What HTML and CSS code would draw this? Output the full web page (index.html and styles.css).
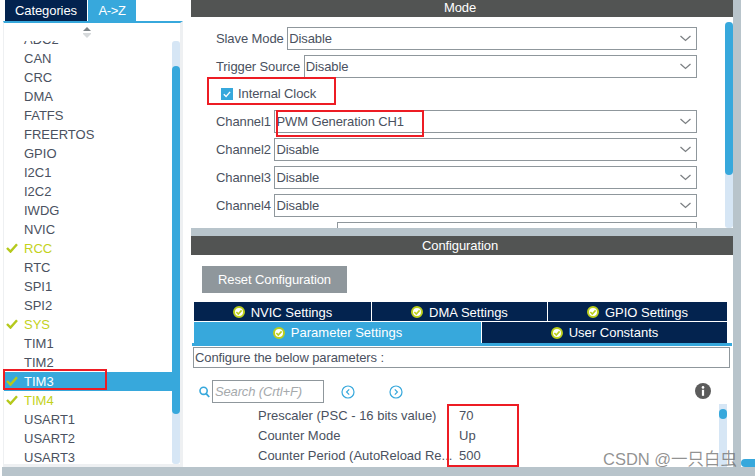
FILE: index.html
```html
<!DOCTYPE html>
<html lang="en">
<head>
<meta charset="utf-8">
<title>Timer configuration</title>
<link rel="stylesheet" href="styles.css">
</head>
<body>
<svg class="defs" width="0" height="0">
  <symbol id="ok" viewBox="0 0 12 12">
    <circle cx="6" cy="6" r="5" fill="#fff" stroke="#bccf1c" stroke-width="2"/>
    <path d="M3.4 6l1.9 2 3.3-3.6" fill="none" stroke="#bccf1c" stroke-width="1.6"/>
  </symbol>
  <symbol id="tick" viewBox="0 0 12 10">
    <path d="M1 5l3.5 3.6L11 1.2" fill="none" stroke="#b5c91c" stroke-width="2.4"/>
  </symbol>
  <symbol id="chev" viewBox="0 0 11 7">
    <path d="M.5 1l5 4.5 5-4.5" fill="none" stroke="#7d8184" stroke-width="1.3"/>
  </symbol>
</svg>
<div class="app">
  <aside class="side">
    <div class="side-tabs">
      <div class="side-tab dark">Categories</div>
      <div class="side-tab light">A-&gt;Z</div>
    </div>
    <div class="side-body">
      <div class="side-up">
        <svg width="10" height="11" viewBox="0 0 10 11"><path d="M5 0l4 4H1z" fill="#7e8589"/><path d="M1 6h8v1l-4 4-4-4z" fill="#d6d9db"/></svg>
      </div>
      <div class="side-main">
        <ul class="list">
          <li class="item">ADC2</li>
          <li class="item">CAN</li>
          <li class="item">CRC</li>
          <li class="item">DMA</li>
          <li class="item">FATFS</li>
          <li class="item">FREERTOS</li>
          <li class="item">GPIO</li>
          <li class="item">I2C1</li>
          <li class="item">I2C2</li>
          <li class="item">IWDG</li>
          <li class="item">NVIC</li>
          <li class="item on"><svg class="tick"><use href="#tick"/></svg>RCC</li>
          <li class="item">RTC</li>
          <li class="item">SPI1</li>
          <li class="item">SPI2</li>
          <li class="item on"><svg class="tick"><use href="#tick"/></svg>SYS</li>
          <li class="item">TIM1</li>
          <li class="item">TIM2</li>
          <li class="item sel"><svg class="tick"><use href="#tick"/></svg>TIM3</li>
          <li class="item on"><svg class="tick"><use href="#tick"/></svg>TIM4</li>
          <li class="item">USART1</li>
          <li class="item">USART2</li>
          <li class="item">USART3</li>
        </ul>
        <div class="vbar side-bar"><div class="thumb"></div></div>
      </div>
    </div>
  </aside>
  <main class="main">
    <section class="mode">
      <h2 class="head head-mode">Mode</h2>
      <div class="mode-body">
        <div class="form">
          <div class="row"><span class="lab">Slave Mode</span><div class="select">Disable<svg class="chev"><use href="#chev"/></svg></div></div>
          <div class="row"><span class="lab">Trigger Source</span><div class="select">Disable<svg class="chev"><use href="#chev"/></svg></div></div>
          <div class="check-row">
            <svg class="box" width="12" height="12" viewBox="0 0 12 12"><rect width="12" height="12" fill="#37a8dc"/><path d="M2.8 6.2l2.3 2.3 4-4.6" fill="none" stroke="#fff" stroke-width="1.4"/></svg>
            <span class="lab lab-check">Internal Clock</span>
          </div>
          <div class="row"><span class="lab">Channel1</span><div class="select">PWM Generation CH1<svg class="chev"><use href="#chev"/></svg></div></div>
          <div class="row"><span class="lab">Channel2</span><div class="select">Disable<svg class="chev"><use href="#chev"/></svg></div></div>
          <div class="row"><span class="lab">Channel3</span><div class="select">Disable<svg class="chev"><use href="#chev"/></svg></div></div>
          <div class="row"><span class="lab">Channel4</span><div class="select">Disable<svg class="chev"><use href="#chev"/></svg></div></div>
          <div class="row row-cut"><div class="select"></div></div>
        </div>
        <div class="vbar mode-bar"><div class="thumb"></div></div>
      </div>
    </section>
    <section class="config">
      <h2 class="head">Configuration</h2>
      <div class="config-body">
        <button class="reset" type="button">Reset Configuration</button>
        <div class="tabs">
          <div class="tab t1"><svg class="ok"><use href="#ok"/></svg>NVIC Settings</div>
          <div class="tab t2"><svg class="ok"><use href="#ok"/></svg>DMA Settings</div>
          <div class="tab t3"><svg class="ok"><use href="#ok"/></svg>GPIO Settings</div>
          <div class="tab t4 active"><svg class="ok"><use href="#ok"/></svg>Parameter Settings</div>
          <div class="tab t5"><svg class="ok"><use href="#ok"/></svg>User Constants</div>
        </div>
        <div class="tab-line"></div>
        <div class="hint">Configure the below parameters :</div>
        <div class="tools">
          <svg class="mag" width="11" height="12" viewBox="0 0 11 12"><circle cx="4.6" cy="4.8" r="3.6" fill="none" stroke="#37a8dc" stroke-width="1.6"/><path d="M7.2 7.6l3 3.4" stroke="#37a8dc" stroke-width="1.8"/></svg>
          <div class="search">Search (Crtl+F)</div>
          <svg class="nav nav-prev" width="14" height="14" viewBox="0 0 14 14"><circle cx="7" cy="7" r="6" fill="none" stroke="#37a8dc" stroke-width="1.2"/><path d="M8.2 4.4L5.6 7l2.6 2.6" fill="none" stroke="#37a8dc" stroke-width="1.2"/></svg>
          <svg class="nav nav-next" width="14" height="14" viewBox="0 0 14 14"><circle cx="7" cy="7" r="6" fill="none" stroke="#37a8dc" stroke-width="1.2"/><path d="M5.8 4.4L8.4 7 5.8 9.6" fill="none" stroke="#37a8dc" stroke-width="1.2"/></svg>
          <svg class="info" width="16" height="16" viewBox="0 0 16 16"><circle cx="8" cy="8" r="8" fill="#5c5c5c"/><rect x="6.9" y="6.8" width="2.2" height="6" fill="#fff"/><circle cx="8" cy="4.4" r="1.3" fill="#fff"/></svg>
        </div>
        <div class="params">
          <dl class="plist">
            <div class="prow"><dt>Prescaler (PSC - 16 bits value)</dt><dd>70</dd></div>
            <div class="prow"><dt>Counter Mode</dt><dd>Up</dd></div>
            <div class="prow"><dt>Counter Period (AutoReload Re...</dt><dd>500</dd></div>
          </dl>
          <div class="vbar param-bar"><div class="dot"></div></div>
        </div>
      </div>
    </section>
  </main>
  <div class="gutter"></div>
  <div class="blob"></div>
</div>
<div class="foot"></div>
<div class="mark m-clock"></div>
<div class="mark m-pwm"></div>
<div class="mark m-tim"></div>
<div class="mark m-vals"></div>
<div class="wm">CSDN @一只白虫</div>
</body>
</html>
```
FILE: styles.css
```css
* { box-sizing: border-box; }
html, body { margin: 0; padding: 0; }
body {
  position: relative;
  width: 755px;
  height: 476px;
  overflow: hidden;
  background: #fff;
  color: #4a5160;
  font: 13px/19px "Liberation Sans", Arial, sans-serif;
}
.defs { position: absolute; }
.app { display: flex; height: 467px; padding-left: 3px; position: relative; }
.foot { height: 9px; margin-left: 2px; background: #b8c4cb; }

/* sidebar */
.side { width: 180px; display: flex; flex-direction: column; }
.side-tabs { display: flex; height: 21px; padding-left: 2px; gap: 1px; }
.side-tab { color: #fff; text-align: center; line-height: 21px; font-size: 13px; }
.side-tab.dark { width: 82px; background: #03234f; letter-spacing: -.1px; }
.side-tab.light { width: 48px; background: #37a8dc; letter-spacing: -.4px; }
.side-body {
  flex: 1; display: flex; flex-direction: column; min-height: 0;
  border-top: 2px solid #37a8dc;
  border-left: 1px solid #eef0f2;
  border-right: 3px solid #eef0f2;
  border-bottom: 3px solid #eef0f2;
}
.side-up { height: 18px; padding: 4px 0 0 78px; line-height: 0; }
.side-main { flex: 1; display: flex; min-height: 0; }
.list { flex: 1; margin: 0; padding: 0; list-style: none; overflow: hidden; }
.item { position: relative; height: 19px; padding-left: 20px; }
.item:first-child { margin-top: -11px; }
.item.on { color: #c3d21c; }
.item.sel { background: #37a8dc; color: #fff; }
.tick { position: absolute; left: 2px; top: 4px; width: 12px; height: 10px; }
.vbar { position: relative; width: 8px; background: #d6e6f5; border-radius: 3px; }
.thumb { background: #37a8dc; border-radius: 4px; }
.side-bar .thumb { position: relative; top: 25px; height: 348px; }

/* main */
.main { width: 542px; margin-left: 8px; display: flex; flex-direction: column; background: #b8c4cb; }
.gutter { width: 8px; background: #b8c4cb; }
.blob { position: absolute; left: 741px; top: 459px; width: 14px; height: 8px; border-radius: 4px 0 0 4px; background: #37a8dc; }
.head { margin: 0; height: 19px; padding-right: 4px; background: #525453; color: #fff; font-size: 13px; font-weight: 400; line-height: 19px; text-align: center; letter-spacing: -.1px; }
.head-mode { height: 17px; line-height: 15px; }
.mode { height: 228px; background: #fff; display: flex; flex-direction: column; }
.mode-body { flex: 1; display: flex; min-height: 0; }
.form { flex: 1; min-width: 0; overflow: hidden; padding: 10px 28px 0 25px; }
.row { display: flex; height: 23px; align-items: center; gap: 3.6px; margin-bottom: 5px; }
.row-cut { padding-left: 121px; }
.lab { letter-spacing: -.1px; white-space: nowrap; }
.lab-check { padding-bottom: 2px; }
.select { position: relative; flex: 1; height: 23px; border: 1px solid #8f979c; padding-left: 1px; line-height: 21px; letter-spacing: -.1px; }
.chev { position: absolute; right: 5px; top: 7px; width: 11px; height: 7px; }
.check-row { display: flex; align-items: center; height: 22px; gap: 5px; margin-bottom: 5px; padding-left: 5px; }
.mode-bar { margin-top: 5px; }
.mode-bar .thumb { height: 153px; }

.config { flex: 1; margin-top: 8px; background: #fff; display: flex; flex-direction: column; min-height: 0; }
.config-body { flex: 1; position: relative; min-height: 0; display: flex; flex-direction: column; padding: 11px 2px 0 2px; }
.reset { align-self: flex-start; margin-left: 9px; width: 145px; height: 27px; border: 0; padding: 0; background: #8f979c; color: #fff; font: 13px "Liberation Sans", Arial, sans-serif; letter-spacing: -.1px; }
.tabs { display: grid; grid-template-columns: 177px 1px 109px 1px 65px 1px 179px; grid-template-rows: 19px 21px; row-gap: 1px; margin: 9px 0 0 1px; width: 533px; }
.tab { display: flex; align-items: center; justify-content: center; gap: 6px; background: #03234f; color: #fff; }
.t1 { grid-column: 1; grid-row: 1; padding-top: 1px; }
.t2 { grid-column: 3 / 6; grid-row: 1; padding-top: 1px; }
.t3 { grid-column: 7; grid-row: 1; padding-top: 1px; }
.t4 { grid-column: 1 / 4; grid-row: 2; }
.t5 { grid-column: 5 / 8; grid-row: 2; }
.tab.active { background: #37a8dc; }
.ok { width: 12px; height: 12px; flex: none; }
.tab-line { height: 3px; background: #37a8dc; margin-right: -1px; margin-left: -1px; }
.hint { height: 21px; margin: 1px 1px 0 0; border: 1px solid #8f979c; padding-left: 1px; line-height: 19px; letter-spacing: -.1px; }
.tools { position: relative; height: 36px; }
.mag { position: absolute; left: 6px; top: 18px; }
.search { position: absolute; left: 19px; top: 12px; width: 112px; height: 23px; border: 1px solid #8f979c; padding-left: 2px; line-height: 21px; color: #a5a9ac; font-style: italic; letter-spacing: -.15px; }
.nav { position: absolute; top: 17px; }
.nav-prev { left: 148px; }
.nav-next { left: 196px; }
.info { position: absolute; left: 502px; top: 15px; }
.params { flex: 1; display: flex; min-height: 0; padding-left: 65px; padding-right: 4px; }
.plist { flex: 1; margin: 2px 0 0; overflow: hidden; }
.prow { display: flex; height: 20px; line-height: 20px; }
.prow dt { width: 201px; white-space: nowrap; }
.prow dd { margin: 0; }
.param-bar { width: 8px; border-radius: 0; }
.dot { position: absolute; top: 5px; left: 0; width: 8px; height: 10px; border-radius: 4px; background: #37a8dc; }

/* annotations */
.mark { position: absolute; border: 2px solid #ed1c24; }
.m-clock { left: 207px; top: 77px; width: 129px; height: 28px; }
.m-pwm { left: 276px; top: 110px; width: 148px; height: 27px; }
.m-tim { left: 3px; top: 369px; width: 104px; height: 21px; }
.m-vals { left: 447px; top: 404px; width: 72px; height: 63px; }
.wm { position: absolute; left: 603px; top: 448px; font: 16.5px/22px "Liberation Sans", "Noto Sans CJK SC", sans-serif; color: rgba(110,110,110,.75); white-space: nowrap; }
```
